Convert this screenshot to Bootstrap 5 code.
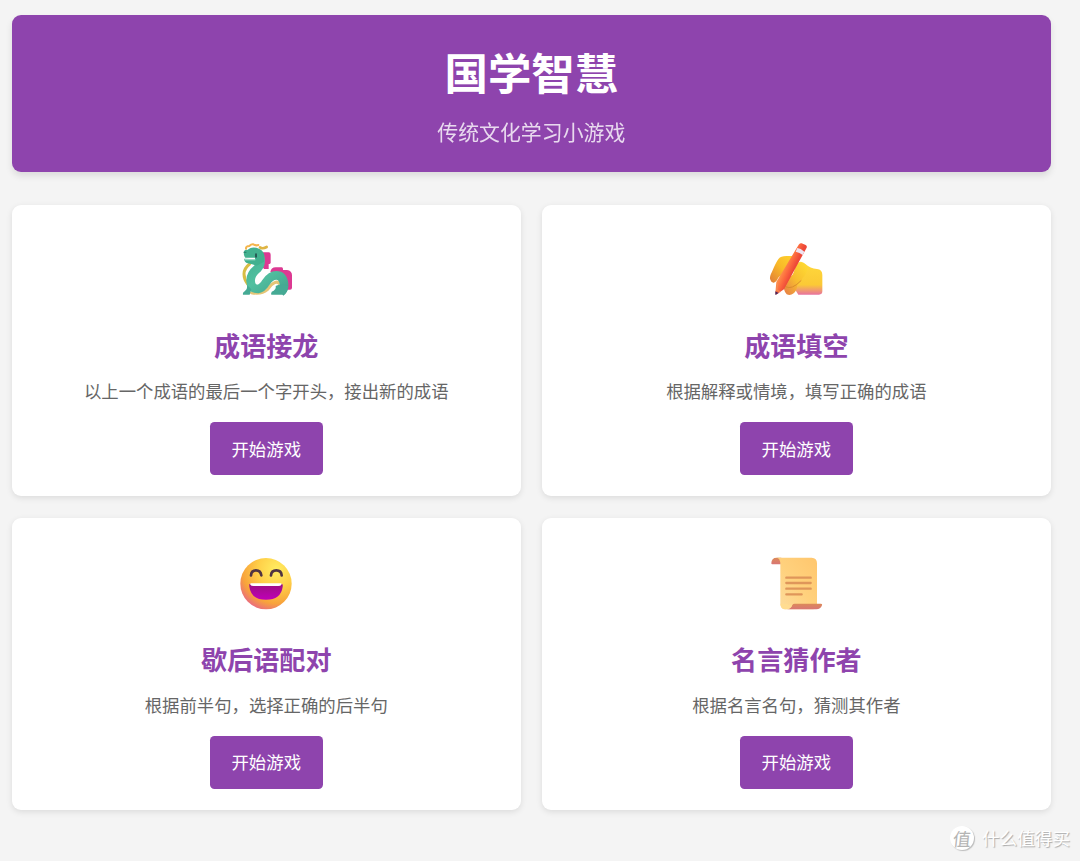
<!DOCTYPE html>
<html lang="zh-CN">
<head>
<meta charset="utf-8">
<meta name="viewport" content="width=device-width, initial-scale=1">
<title>国学智慧</title>
<link href="https://cdn.jsdelivr.net/npm/bootstrap@5.3.0/dist/css/bootstrap.min.css" rel="stylesheet">
<style>
body{background:#f4f4f4;font-family:"Noto Sans CJK SC",sans-serif;height:861px;overflow:hidden;position:relative}
.page{width:1038.6px;margin:15px 0 0 12px}
.hero{background:#8e44ad;border-radius:9px;height:157px;padding-top:26px;margin-bottom:33px;box-shadow:0 4px 7px rgba(0,0,0,.1)}
.hero h1{font-size:43.4px;font-weight:700;line-height:60px;margin:0}
.hero p{font-size:20.9px;line-height:30px;margin:15px 0 0;opacity:.8}
.games{display:grid;grid-template-columns:1fr 1fr;gap:22px 21.6px}
.game{height:291.4px;border:0;border-radius:9px;padding-top:30.3px;box-shadow:0 2px 6px rgba(0,0,0,.1)}
.game svg{width:72px;height:70px}
.game h2{font-size:26.1px;font-weight:700;color:#8e44ad;line-height:40px;margin:20px 0 13px}
.game p{font-size:17.36px;line-height:26px;color:#666;margin:0 0 18px}
.btn-play,.btn-play:hover{background:#8e44ad;color:#fff;border:0;border-radius:4.5px;width:112.6px;height:53px;font-size:17.4px;padding:0}
.brandmark{position:absolute;left:950px;top:825px;color:#fff;font-size:17.6px;line-height:26px;text-shadow:1px 1px 1px #aaa}
.seal{width:24px;height:24px;background:#fff;color:#b4b4b4;font-size:18px;line-height:22px;text-shadow:none;box-shadow:1px 1px 1px #bbb}
.seal span{transform:skewX(-6deg)}
</style>
<script src="https://cdn.jsdelivr.net/npm/bootstrap@5.3.0/dist/js/bootstrap.bundle.min.js"></script>
</head>
<body>
<main class="page">
<header class="hero text-white text-center">
<h1>国学智慧</h1>
<p>传统文化学习小游戏</p>
</header>
<section class="games">
<article class="game card align-items-center text-center">
<svg viewBox="0 1 216 210" fill="none" stroke-linecap="round" stroke-linejoin="round">
<defs><linearGradient id="dg" gradientUnits="userSpaceOnUse" x1="50" y1="45" x2="150" y2="180"><stop offset="0" stop-color="#3fae8e"/><stop offset=".55" stop-color="#52c0a0"/><stop offset="1" stop-color="#43a58e"/></linearGradient></defs>
<path d="M98 53h18q6 0 6 7v24q-1 5-6 4v15h-14l-6-8zM121 112q2-14 16-14h18q5 0 4 8h12q15 2 15 16v37q0 6-6 6h-14l-10-37z" fill="#dc3992"/>
<path d="M59 88q-17 13-17 30 0 16 11 30" stroke="#d8bd45" stroke-width="9"/>
<path d="M48 42q-1-8 10-8 6-6 12-5 8 5 15 2" stroke="#f4b54c" stroke-width="6"/>
<path d="M90 38q8 6 20-1" stroke="#dfb544" stroke-width="8"/>
<path d="M64 174q30 6 48-9 10-16 22-21 9-4 13 2" stroke="#e5c576" stroke-width="9"/>
<path d="M89 60q8 26-7 42-22 18-20 38 1 23 22 23 13-2 24-20 14-21 31-21 20 0 23 26 1 18-9 24" stroke="url(#dg)" stroke-width="26" stroke-linecap="butt"/>
<path d="M42 50q2-6 10-4l8-5q12-5 27 1 12 5 15 17v22l-22 12q-12-4-27-7-11-3-10-14l32 2v-5H46q-6-6-4-19z" fill="#42b18f"/>
<path d="M45 75h31" stroke="#9adbc6" stroke-width="4" stroke-linecap="butt"/>
<path d="M42 53h6" stroke="#287e69" stroke-width="3"/>
<path d="M78 59v7" stroke="#265c56" stroke-width="6"/>
<path d="M51 151l13 13-5 16H39q-2-7 6-11 8-3 6-18zM137 154q10-6 24-5l14 5q-3 26-17 26h-34q-3-9 7-12 8-3 6-14z" fill="#45aa94"/>
</svg>
<h2>成语接龙</h2><p>以上一个成语的最后一个字开头，接出新的成语</p><button class="btn btn-play">开始游戏</button>
</article>
<article class="game card align-items-center text-center">
<svg viewBox="1 1 216 210" fill="none">
<defs>
<linearGradient id="hand" x1="0" y1="0" x2="0" y2="1"><stop offset="0" stop-color="#ffd93b"/><stop offset=".7" stop-color="#fbc936"/><stop offset="1" stop-color="#e8739f"/></linearGradient>
<linearGradient id="thumb" x1="1" y1="0" x2="0" y2="1"><stop offset="0" stop-color="#ffd42e"/><stop offset=".5" stop-color="#f9b928"/><stop offset="1" stop-color="#e07b38"/></linearGradient>
<linearGradient id="finger" x1="1" y1="0" x2="0" y2="1"><stop offset="0" stop-color="#ffdd33"/><stop offset=".5" stop-color="#f8bd2f"/><stop offset="1" stop-color="#e57a48"/></linearGradient>
<linearGradient id="pencil" gradientUnits="userSpaceOnUse" x1="78" y1="88" x2="104" y2="100"><stop offset="0" stop-color="#ff8c48"/><stop offset=".5" stop-color="#fc683e"/><stop offset="1" stop-color="#ed4939"/></linearGradient>
<filter id="soft"><feGaussianBlur stdDeviation="2"/></filter>
</defs>
<path d="M108 93q13-21 30-4 13 12 34 14 16 2 16 18v49q0 10-10 10h-62l-22-35z" fill="url(#hand)"/>
<path d="M32 135q-4-8 5-24 12-29 20-39 6-8 23-8h20q11 3 3 12L77 121q-17 0-22 10-7 14-14 13-7-2-9-9z" fill="url(#thumb)"/>
<path d="M72 144q0-16 13-17 12-1 17-13 5-15 13-25 12-8 21-1 12 9 1 33-11 14-24 27-1 20-11 28-10 8-21 3-10-10-9-35z" fill="url(#finger)"/>
<path d="M77 156q10 5 21 1 13-5 27-20" stroke="#d98b2c" stroke-width="3" filter="url(#soft)"/>
<path d="M117 30q3-6 9-4l12 5q5 2 3 8L73 164l-24 16-2-5 3-33z" fill="url(#pencil)"/>
<path d="M113 40q10 1 21 11l-5 10q-9-7-21-10z" fill="#eee3f1"/>
<path d="M47 170q6 3 10 5l-10 6z" fill="#49265e"/><path d="M54 147l-3 19 11 6" stroke="#f48b58" stroke-width="4"/>
</svg>
<h2>成语填空</h2><p>根据解释或情境，填写正确的成语</p><button class="btn btn-play">开始游戏</button>
</article>
<article class="game card align-items-center text-center">
<svg viewBox="0 1 216 210" fill="none">
<defs><radialGradient id="face" cx=".7" cy=".22" r=".9"><stop offset="0" stop-color="#ffed61"/><stop offset=".4" stop-color="#ffcf48"/><stop offset=".74" stop-color="#f8a33b"/><stop offset="1" stop-color="#e65c91"/></radialGradient><linearGradient id="mouth" x1="0" y1="0" x2="0" y2="1"><stop offset="0" stop-color="#9d0f81"/><stop offset="1" stop-color="#bf00b8"/></linearGradient></defs>
<circle cx="108" cy="105" r="77" fill="url(#face)"/>
<path d="M63 80q1-15 15-15t16 15M123 80q1-15 16-15t16 15" stroke="#503442" stroke-width="8" stroke-linecap="round"/>
<path d="M59 106h97q3 0 2 8-5 39-50 39t-50-39q-1-8 1-8z" fill="url(#mouth)"/>
<path d="M63 104h89q4 0 2 4-2 4-9 4H71q-8 0-10-4-1-4 2-4z" fill="#fff"/>
</svg>
<h2>歇后语配对</h2><p>根据前半句，选择正确的后半句</p><button class="btn btn-play">开始游戏</button>
</article>
<article class="game card align-items-center text-center">
<svg viewBox="1 1 216 210" fill="none">
<defs><linearGradient id="paper" x1="1" y1="0" x2="0" y2="1"><stop offset="0" stop-color="#ffc66d"/><stop offset=".5" stop-color="#ffd17d"/><stop offset="1" stop-color="#fcdda0"/></linearGradient><linearGradient id="roll" x1="0" y1="0" x2="0" y2="1"><stop offset="0" stop-color="#dc8a58"/><stop offset="1" stop-color="#d97675"/></linearGradient></defs>
<path d="M35 44q0-17 16-17h14v20H38q-3 0-3-3z" fill="url(#roll)"/>
<path d="M50 27h106q16 1 16 17v126q-1 12-12 12H76q-13-1-14-17V47q0-19-12-20z" fill="url(#paper)"/>
<path d="M81 182q14-1 17-13 2-4 7-4h79q5 0 3 5-4 12-17 12z" fill="url(#roll)"/>
<path d="M62 165q1 17 15 17 18 0 21-15-10 6-16-1z" fill="#ffdc91"/>
<path d="M80 87h73M80 103h73M80 120h73M80 137h46" stroke="#df965a" stroke-width="7" stroke-linecap="round"/>
</svg>
<h2>名言猜作者</h2><p>根据名言名句，猜测其作者</p><button class="btn btn-play">开始游戏</button>
</article>
</section>
</main>
<div class="brandmark d-flex align-items-center text-nowrap"><div class="seal rounded-circle d-flex align-items-center justify-content-center"><span>值</span></div><div class="ms-2">什么值得买</div></div>
</body>
</html>
